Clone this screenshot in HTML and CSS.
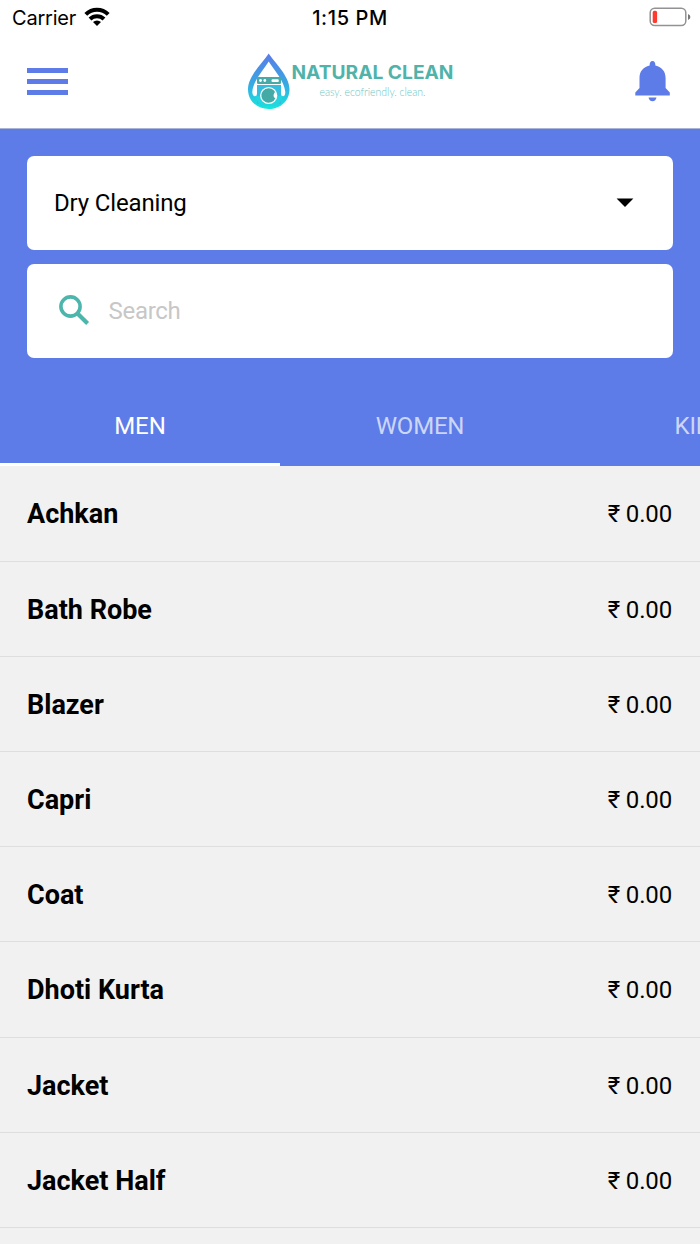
FILE: index.html
```html
<!DOCTYPE html>
<html lang="en">
<head>
<meta charset="utf-8">
<title>Natural Clean</title>
<link rel="stylesheet" href="styles.css">
</head>
<body>
<div class="screen">
  <div class="status">
    <div class="carrier"><span>Carrier</span>
      <svg class="wifi" width="26" height="20" viewBox="0 0 26 20"><g fill="none" stroke="#000" stroke-width="4"><path d="M1.8 7.4A16 16 0 0 1 24.2 7.4"/><path d="M6 12A10 10 0 0 1 20 12"/></g><path d="M13 19L9 15A5.8 5.8 0 0 1 17 15Z"/></svg>
    </div>
    <div class="time">1:15 PM</div>
    <svg class="battery" width="42" height="20" viewBox="0 0 42 20"><rect x="1.2" y="1.2" width="35.6" height="17.4" rx="4.5" fill="none" stroke="#929292" stroke-width="1.5"/><rect x="3.7" y="3.8" width="4.4" height="12.2" rx="1.6" fill="#ff3b30"/><path d="M39 7Q41.4 7.8 41.4 10T39 13Z" fill="#777"/></svg>
  </div>
  <header class="header">
    <div class="menu"><i></i><i></i><i></i></div>
    <svg class="logo" width="220" height="64" viewBox="0 0 220 64">
      <defs><linearGradient id="drop" x1="0" y1="0" x2="0" y2="1"><stop offset="0" stop-color="#5b7be9"/><stop offset=".55" stop-color="#38a9e2"/><stop offset="1" stop-color="#16e8dc"/></linearGradient></defs>
      <path fill="url(#drop)" d="M28.700 3.500C23 12.500 8 26 8 39.200C8 51 17 59 28.700 59S49.500 51 49.500 39.200C49.500 26 34.500 12.500 28.700 3.500Z"/>
      <path fill="#fff" d="M28.700 11.500C23.500 20 13 31 12.300 42C12.500 45 13.500 46.300 15 46.300C16.500 46.300 17 45 17 43V35H41V43C41 45 41.500 46.300 43 46.300C44.500 46.300 45.200 45 45.300 42C44.500 31 34 20 28.700 11.500Z"/>
      <rect x="17" y="27" width="24" height="7" rx="1.2" fill="#46aaa9"/>
      <circle cx="20.500" cy="30.500" r="1.400" fill="#fff"/><circle cx="24.800" cy="30.500" r="1.400" fill="#fff"/><rect x="31.500" y="29.200" width="7.300" height="2.800" rx="1" fill="#fff"/>
      <path d="M17 35H41V54H17Z" fill="#35bddd"/>
      <path d="M15 46H43L38 56H20Z" fill="#22d5df"/>
      <circle cx="28.700" cy="45.500" r="8.600" fill="#fff"/>
      <path d="M34 40.500A7.300 7.300 0 1 0 35.500 48Q33.500 48 33.500 45.500Q33.800 43 35 42Z" fill="#43aaa5"/>
      <text class="brand" x="51.500" y="28.500" textLength="162" lengthAdjust="spacingAndGlyphs">NATURAL CLEAN</text>
      <text class="tagline" x="79.500" y="45.500" textLength="106" lengthAdjust="spacingAndGlyphs">easy. ecofriendly. clean.</text>
    </svg>
    <svg class="bell" width="36" height="42" viewBox="0 0 36 42" fill="#5d7ce8"><path d="M17.500 1C15.500 1 14.600 2.500 14.600 5.500C8 7 4.500 11.500 4.500 18V28L.3 32.500V35.500H34.800V32.500L30.600 28V18C30.600 11.500 27 7 20.400 5.500C20.400 2.500 19.500 1 17.500 1Z"/><path d="M13.500 37.600H21.500Q20.800 41.300 17.500 41.300T13.500 37.600Z"/></svg>
  </header>
  <section class="filters">
    <div class="field select"><span>Dry Cleaning</span><svg width="18" height="10" viewBox="0 0 18 10"><path d="M.6.500H17.400L9 9Z"/></svg></div>
    <div class="field search"><svg width="31" height="31" viewBox="0 0 31 31" fill="none" stroke="#4db6ac"><circle cx="11.500" cy="11.500" r="9.600" stroke-width="3.600"/><path d="M18.500 18.500L28.600 28.600" stroke-width="4.200"/></svg><span>Search</span></div>
    <nav class="tabs"><div class="tab active">MEN</div><div class="tab">WOMEN</div><div class="tab">KIDS</div></nav>
  </section>
  <main class="list">
    <div class="row"><b>Achkan</b><span>₹ 0.00</span></div>
    <div class="row"><b>Bath Robe</b><span>₹ 0.00</span></div>
    <div class="row"><b>Blazer</b><span>₹ 0.00</span></div>
    <div class="row"><b>Capri</b><span>₹ 0.00</span></div>
    <div class="row"><b>Coat</b><span>₹ 0.00</span></div>
    <div class="row"><b>Dhoti Kurta</b><span>₹ 0.00</span></div>
    <div class="row"><b>Jacket</b><span>₹ 0.00</span></div>
    <div class="row"><b>Jacket Half</b><span>₹ 0.00</span></div>
  </main>
</div>
</body>
</html>
```
FILE: styles.css
```css
* { box-sizing: border-box; }
body { margin: 0; background: #f1f1f1; }
svg { display: block; flex: none; }
.screen { height: 1244px; overflow: hidden; font-family: Roboto, sans-serif; color: #000; }
.status { height: 36px; padding: 0 9px 0 12px; background: #fff; display: grid; grid-template-columns: 1fr auto 1fr; align-items: center; font: 20px/36px Inter, sans-serif; }
.carrier { display: flex; align-items: center; gap: 8px; letter-spacing: -.22px; }
.wifi { margin-top: -3px; }
.time { font-weight: 500; letter-spacing: .6px; margin-right: 3px; }
.battery { justify-self: end; margin-top: -2px; }
.header { height: 93px; padding: 0 29px 0 27px; background: #fff; border-bottom: 1px solid #a9b4d8; display: grid; grid-template-columns: 1fr auto 1fr; }
.menu { display: flex; flex-direction: column; gap: 6px; margin-top: 32px; }
.menu i { width: 41px; height: 5px; background: #5d7ce8; }
.logo { margin: 14px -1px 0 1px; }
.brand { font: 700 18.500px Inter, sans-serif; fill: #50b3aa; }
.tagline { font: 300 11.500px Lato, sans-serif; fill: #6cc6c4; }
.bell { justify-self: end; margin-top: 24px; }
.filters { height: 337.400px; padding: 26.500px 0 0; background: #5d7ce8; display: flex; flex-direction: column; }
.field { width: 646px; height: 94.800px; margin: 0 27px 13.400px; border-radius: 7px; background: #fff; display: flex; align-items: center; font-size: 24px; }
.select { justify-content: space-between; padding: 0 39px 0 27px; letter-spacing: -.15px; }
.select svg { margin-top: 1px; }
.search { padding: 0 0 1px 32px; gap: 18.500px; color: #c7c7c7; letter-spacing: -.3px; }
.tabs { display: flex; margin-top: auto; height: 81px; overflow: hidden; }
.tab { flex: 0 0 280px; height: 81px; padding-top: 4px; border-bottom: 3px solid transparent; display: flex; align-items: center; justify-content: center; font-size: 24px; letter-spacing: -.2px; color: rgba(255,255,255,.7); }
.active { color: #fff; letter-spacing: 0; border-bottom-color: #fff; }
.row { height: 95.200px; padding: 2px 28px 0 27px; border-bottom: 1px solid #dedede; display: flex; align-items: center; justify-content: space-between; font-size: 24px; letter-spacing: -.15px; }
.row b { font-size: 27px; font-weight: 700; letter-spacing: 0; }
```
